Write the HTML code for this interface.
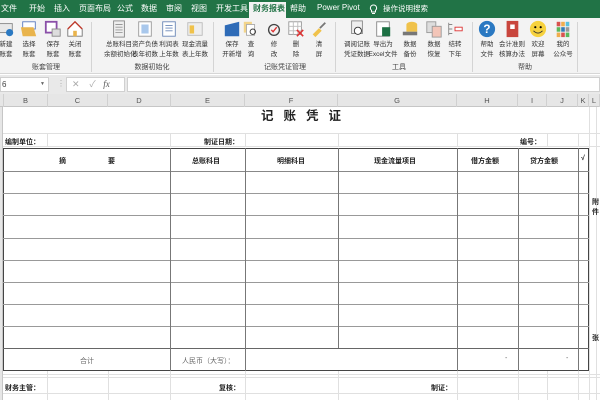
<!DOCTYPE html>
<html><head><meta charset="utf-8"><style>
*{margin:0;padding:0;box-sizing:border-box}
body{width:600px;height:400px;overflow:hidden;position:relative;background:#fff;font-family:"Liberation Sans","Noto Sans CJK SC",sans-serif;}
.a{position:absolute;white-space:nowrap}
.tab{position:absolute;top:3px;font-size:8px;color:#fff}
.btn{position:absolute;top:20px;width:30px;margin-left:-15px;text-align:center;font-size:6.5px;line-height:10px;color:#333;white-space:nowrap}
.btn svg{display:block;margin:0 auto 2px;width:18px;height:18px}
.gl{position:absolute;top:62px;font-size:7px;color:#444;transform:translateX(-50%);white-space:nowrap}
.sep{position:absolute;top:22px;width:1px;height:50px;background:#d4d4d4}
.ch{position:absolute;top:94px;height:13px;font-size:7.5px;color:#555;text-align:center;line-height:13px;border-right:1px solid #d0d0d0}
.hl{position:absolute;height:1px;background:#e0e0e0}
.vl{position:absolute;width:1px;background:#e0e0e0}
.tk{position:absolute;background:#555}
.t{position:absolute;font-size:7px;font-weight:bold;color:#222;white-space:nowrap}
</style></head><body>
<div class="a" style="left:0;top:0;width:600px;height:18px;background:#217346"></div>
<div class="a" style="left:249px;top:2px;width:37px;height:17px;background:#f3f3f3"></div>
<span class="tab" style="left:1px">文件</span>
<span class="tab" style="left:29px">开始</span>
<span class="tab" style="left:54px">插入</span>
<span class="tab" style="left:79px">页面布局</span>
<span class="tab" style="left:117px">公式</span>
<span class="tab" style="left:141px">数据</span>
<span class="tab" style="left:166px">审阅</span>
<span class="tab" style="left:191px">视图</span>
<span class="tab" style="left:216px">开发工具</span>
<span class="tab" style="left:253px;color:#217346;font-weight:bold">财务报表</span>
<span class="tab" style="left:290px">帮助</span>
<span class="tab" style="left:317px">Power Pivot</span>
<svg class="a" style="left:369px;top:4px" width="9" height="11" viewBox="0 0 9 11"><path d="M4.5 1a3 3 0 0 0-2 5.3V8h4V6.3A3 3 0 0 0 4.5 1zM3 9.5h3" fill="none" stroke="#fff" stroke-width="1"/></svg>
<span class="tab" style="left:383px;font-size:7.5px">操作说明搜索</span>
<div class="a" style="left:0;top:18px;width:600px;height:56px;background:#f3f3f3;border-bottom:1px solid #d6d6d6"></div>
<div class="sep" style="left:91px"></div><div class="sep" style="left:213px"></div><div class="sep" style="left:335px"></div><div class="sep" style="left:472px"></div><div class="sep" style="left:577px"></div>

<div class="btn" style="left:6px"><svg viewBox="0 0 20 20"><rect x="1" y="4" width="16" height="10" fill="#e8e8e8" stroke="#888"/><circle cx="14" cy="14" r="4" fill="#2b79c2"/></svg>新建<br>账套</div>
<div class="btn" style="left:29px"><svg viewBox="0 0 20 20"><rect x="3" y="2" width="14" height="8" fill="#fff" stroke="#5a7bbf"/><path d="M1 8h14l3 10H3z" fill="#e9b44c"/></svg>选择<br>账套</div>
<div class="btn" style="left:53px"><svg viewBox="0 0 20 20"><rect x="2" y="2" width="12" height="12" fill="#fff" stroke="#8a4fa8" stroke-width="2"/><rect x="9" y="10" width="9" height="8" fill="#ddd" stroke="#888"/></svg>保存<br>账套</div>
<div class="btn" style="left:75px"><svg viewBox="0 0 20 20"><path d="M2 10L10 2l8 8v8H2z" fill="#fff" stroke="#777"/><path d="M2 10L10 2l8 8" fill="none" stroke="#c0392b" stroke-width="1.5"/><rect x="8" y="12" width="4" height="6" fill="#e9b44c"/></svg>关闭<br>账套</div>

<div class="btn" style="left:119px"><svg viewBox="0 0 20 20"><rect x="4" y="1" width="12" height="18" fill="#eee" stroke="#888"/><path d="M6 5h8M6 8h8M6 11h8M6 14h8" stroke="#999"/></svg>总账科目<br>余额初始化</div>
<div class="btn" style="left:145px"><svg viewBox="0 0 20 20"><rect x="3" y="2" width="14" height="16" fill="#fff" stroke="#999"/><rect x="6" y="5" width="8" height="10" fill="#a9c8ec"/></svg>资产负债<br>表年初数</div>
<div class="btn" style="left:169px"><svg viewBox="0 0 20 20"><rect x="3" y="2" width="14" height="16" fill="#fff" stroke="#6a87b8"/><path d="M6 6h8M6 9h8M6 12h8" stroke="#6a87b8"/></svg>利润表<br>上年数</div>
<div class="btn" style="left:195px"><svg viewBox="0 0 20 20"><rect x="2" y="3" width="16" height="14" fill="#eee" stroke="#bbb"/><rect x="4" y="6" width="5" height="9" fill="#f0c24b"/></svg>现金流量<br>表上年数</div>

<div class="btn" style="left:232px"><svg viewBox="0 0 20 20"><path d="M2 6L18 2v16H2z" fill="#2e6bb7"/></svg>保存<br>开新增</div>
<div class="btn" style="left:251px"><svg viewBox="0 0 20 20"><rect x="2" y="2" width="9" height="12" fill="#f2d48a"/><rect x="5" y="5" width="9" height="12" fill="#fff" stroke="#aaa"/><circle cx="12" cy="13" r="3" fill="none" stroke="#333"/></svg>查<br>询</div>
<div class="btn" style="left:274px"><svg viewBox="0 0 20 20"><circle cx="10" cy="11" r="6" fill="none" stroke="#444" stroke-width="1.5"/><path d="M7 11l2 2 4-5" fill="none" stroke="#d33" stroke-width="1.5"/></svg>修<br>改</div>
<div class="btn" style="left:296px"><svg viewBox="0 0 20 20"><rect x="2" y="2" width="14" height="14" fill="#fff" stroke="#999"/><path d="M2 7h14M2 12h14M7 2v14M12 2v14" stroke="#bbb"/><path d="M11 11l7 7M18 11l-7 7" stroke="#d33" stroke-width="1.8"/></svg>删<br>除</div>
<div class="btn" style="left:319px"><svg viewBox="0 0 20 20"><path d="M3 16l7-7 3 3-7 7z" fill="#f0c24b"/><path d="M11 9l6-6" stroke="#777" stroke-width="2"/></svg>清<br>屏</div>

<div class="btn" style="left:357px"><svg viewBox="0 0 20 20"><rect x="4" y="1" width="12" height="14" fill="#eee" stroke="#888"/><circle cx="11" cy="12" r="4" fill="#fff" stroke="#333"/></svg>调阅记账<br>凭证数据</div>
<div class="btn" style="left:383px"><svg viewBox="0 0 20 20"><rect x="3" y="2" width="14" height="16" fill="#fff" stroke="#888"/><rect x="9" y="8" width="9" height="10" fill="#1d7044"/></svg>导出为<br>Excel文件</div>
<div class="btn" style="left:410px"><svg viewBox="0 0 20 20"><ellipse cx="12" cy="5" rx="6" ry="3" fill="#f0c24b"/><rect x="6" y="5" width="12" height="8" fill="#f0c24b"/><rect x="2" y="13" width="16" height="4" fill="#777"/></svg>数据<br>备份</div>
<div class="btn" style="left:434px"><svg viewBox="0 0 20 20"><rect x="2" y="2" width="10" height="12" fill="#ddd" stroke="#999"/><rect x="8" y="7" width="10" height="12" fill="#f3c5b8" stroke="#999"/></svg>数据<br>恢复</div>
<div class="btn" style="left:455px"><svg viewBox="0 0 20 20"><path d="M3 3v14M3 5h4M3 10h4M3 15h4" stroke="#888"/><rect x="10" y="8" width="8" height="4" fill="#fff" stroke="#d33"/></svg>结转<br>下年</div>

<div class="btn" style="left:487px"><svg viewBox="0 0 20 20"><circle cx="10" cy="10" r="9" fill="#2b79c2"/><text x="10" y="14.5" font-size="13" font-weight="bold" fill="#fff" text-anchor="middle" font-family="Liberation Sans">?</text></svg>帮助<br>文件</div>
<div class="btn" style="left:512px"><svg viewBox="0 0 20 20"><rect x="4" y="1" width="13" height="18" fill="#c9463d"/><rect x="8" y="5" width="5" height="5" fill="#fff"/></svg>会计准则<br>核算办法</div>
<div class="btn" style="left:538px"><svg viewBox="0 0 20 20"><circle cx="10" cy="10" r="9" fill="#f7d23e"/><circle cx="7" cy="8" r="1.2"/><circle cx="13" cy="8" r="1.2"/><path d="M5 12q5 5 10 0" fill="none" stroke="#333"/></svg>欢迎<br>屏幕</div>
<div class="btn" style="left:563px"><svg viewBox="0 0 20 20"><rect x="3" y="2" width="4" height="5" fill="#d9534f"/><rect x="8" y="2" width="4" height="5" fill="#f0ad4e"/><rect x="13" y="2" width="4" height="5" fill="#5bc0de"/><rect x="3" y="8" width="4" height="5" fill="#5cb85c"/><rect x="8" y="8" width="4" height="5" fill="#337ab7"/><rect x="13" y="8" width="4" height="5" fill="#999"/><rect x="3" y="14" width="4" height="5" fill="#f0ad4e"/><rect x="8" y="14" width="4" height="5" fill="#d9534f"/><rect x="13" y="14" width="4" height="5" fill="#5cb85c"/></svg>我的<br>公众号</div>

<span class="gl" style="left:46px">账套管理</span>
<span class="gl" style="left:152px">数据初始化</span>
<span class="gl" style="left:285px">记账凭证管理</span>
<span class="gl" style="left:399px">工具</span>
<span class="gl" style="left:525px">帮助</span>

<div class="a" style="left:0;top:75px;width:600px;height:19px;background:#e9e9e9"></div>
<div class="a" style="left:0;top:77px;width:49px;height:15px;background:#fff;border:1px solid #d0d0d0;font-size:8px;color:#444;padding-left:1px;line-height:13px">6<span style="position:absolute;right:3px;font-size:5px;color:#666">▼</span></div>
<span class="a" style="left:57px;top:79px;font-size:8px;color:#aaa">⋮</span>
<div class="a" style="left:66px;top:77px;width:59px;height:15px;background:#fff;border:1px solid #d0d0d0;font-size:9px;color:#aaa;line-height:13px">&nbsp;&nbsp;✕&nbsp;&nbsp;&nbsp;&nbsp;✓&nbsp;&nbsp;&nbsp;<i style="color:#555;font-family:'Liberation Serif'">fx</i></div>
<div class="a" style="left:127px;top:77px;width:473px;height:15px;background:#fff;border:1px solid #d0d0d0"></div>

<div class="a" style="left:0;top:94px;width:600px;height:13px;background:#e6e6e6;border-bottom:1px solid #c6c6c6"></div>
<div class="ch" style="left:0;width:4px"></div>
<div class="ch" style="left:4px;width:44px">B</div>
<div class="ch" style="left:48px;width:60px">C</div>
<div class="ch" style="left:108px;width:63px">D</div>
<div class="ch" style="left:171px;width:74px">E</div>
<div class="ch" style="left:245px;width:93px">F</div>
<div class="ch" style="left:338px;width:119px">G</div>
<div class="ch" style="left:457px;width:61px">H</div>
<div class="ch" style="left:518px;width:29px">I</div>
<div class="ch" style="left:547px;width:31px">J</div>
<div class="ch" style="left:578px;width:11px">K</div>
<div class="ch" style="left:589px;width:11px">L</div>
<div class="a" style="left:0;top:107px;width:3px;height:293px;background:#e6e6e6;border-right:1px solid #c6c6c6"></div>

<div class="hl" style="left:3px;top:133px;width:597px"></div>
<div class="hl" style="left:3px;top:146px;width:597px"></div>
<div class="hl" style="left:3px;top:374px;width:597px"></div>
<div class="hl" style="left:3px;top:377px;width:597px"></div>
<div class="hl" style="left:3px;top:393px;width:597px"></div>
<div class="vl" style="left:47px;top:133px;height:14px"></div>
<div class="vl" style="left:170px;top:133px;height:14px"></div>
<div class="vl" style="left:245px;top:133px;height:14px"></div>
<div class="vl" style="left:338px;top:133px;height:14px"></div>
<div class="vl" style="left:457px;top:133px;height:14px"></div>
<div class="vl" style="left:547px;top:133px;height:14px"></div>
<div class="vl" style="left:578px;top:133px;height:14px"></div>
<div class="vl" style="left:589px;top:107px;height:293px"></div>
<div class="vl" style="left:596px;top:107px;height:293px"></div>
<div class="vl" style="left:47px;top:371px;height:29px"></div>
<div class="vl" style="left:108px;top:371px;height:29px"></div>
<div class="vl" style="left:170px;top:371px;height:29px"></div>
<div class="vl" style="left:245px;top:371px;height:29px"></div>
<div class="vl" style="left:338px;top:371px;height:29px"></div>
<div class="vl" style="left:457px;top:371px;height:29px"></div>
<div class="vl" style="left:518px;top:371px;height:29px"></div>
<div class="vl" style="left:547px;top:371px;height:29px"></div>
<div class="vl" style="left:578px;top:371px;height:29px"></div>

<span class="t" style="left:261px;top:107px;font-size:12.5px;letter-spacing:10px;line-height:18px">记账凭证</span>
<span class="t" style="left:5px;top:137px">编制单位：</span>
<span class="t" style="left:204px;top:137px">制证日期：</span>
<span class="t" style="left:520px;top:137px">编号：</span>

<div class="a" style="left:3px;top:148px;width:586px;height:223px;border:1.5px solid #444"></div>
<div class="tk" style="left:3px;top:171px;width:586px;height:1px;background:#888"></div>
<div class="tk" style="left:3px;top:193px;width:586px;height:1px;background:#999"></div>
<div class="tk" style="left:3px;top:215px;width:586px;height:1px;background:#999"></div>
<div class="tk" style="left:3px;top:238px;width:586px;height:1px;background:#999"></div>
<div class="tk" style="left:3px;top:260px;width:586px;height:1px;background:#999"></div>
<div class="tk" style="left:3px;top:282px;width:586px;height:1px;background:#999"></div>
<div class="tk" style="left:3px;top:304px;width:586px;height:1px;background:#999"></div>
<div class="tk" style="left:3px;top:326px;width:586px;height:1px;background:#999"></div>
<div class="tk" style="left:3px;top:348px;width:586px;height:1px;background:#666"></div>
<div class="tk" style="left:170px;top:148px;width:1px;height:223px;background:#777"></div>
<div class="tk" style="left:245px;top:148px;width:1px;height:223px;background:#777"></div>
<div class="tk" style="left:338px;top:148px;width:1px;height:200px;background:#777"></div>
<div class="tk" style="left:457px;top:148px;width:1px;height:223px;background:#777"></div>
<div class="tk" style="left:518px;top:148px;width:1px;height:223px;background:#777"></div>
<div class="tk" style="left:578px;top:148px;width:1px;height:223px;background:#777"></div>

<span class="t" style="left:59px;top:156px">摘</span>
<span class="t" style="left:108px;top:156px">要</span>
<span class="t" style="left:192px;top:156px">总账科目</span>
<span class="t" style="left:277px;top:156px">明细科目</span>
<span class="t" style="left:374px;top:156px">现金流量项目</span>
<span class="t" style="left:471px;top:156px">借方金额</span>
<span class="t" style="left:530px;top:156px">贷方金额</span>
<span class="t" style="left:581px;top:155px">√</span>
<span class="t" style="left:592px;top:198px;line-height:10px">附<br>件</span>
<span class="t" style="left:592px;top:333px">张</span>
<span class="t" style="left:80px;top:356px;font-weight:normal;color:#666">合计</span>
<span class="t" style="left:182px;top:356px;font-weight:normal;color:#666">人民币（大写）：</span>
<span class="t" style="left:505px;top:355px;font-weight:normal;color:#666">-</span>
<span class="t" style="left:566px;top:355px;font-weight:normal;color:#666">-</span>
<span class="t" style="left:5px;top:383px">财务主管：</span>
<span class="t" style="left:219px;top:383px">复核：</span>
<span class="t" style="left:431px;top:383px">制证：</span>
</body></html>
